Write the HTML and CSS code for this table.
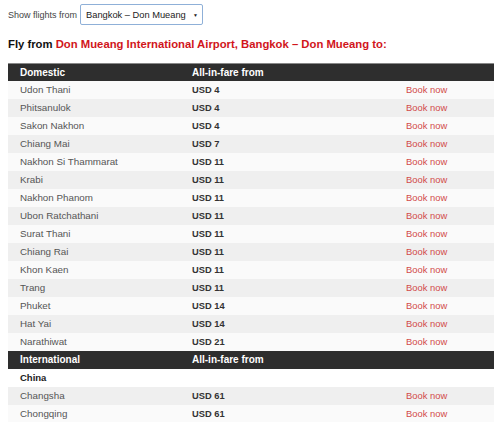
FILE: index.html
```html
<!DOCTYPE html>
<html>
<head>
<meta charset="utf-8">
<link rel="stylesheet" href="styles.css">
</head>
<body>
<div class="picker">
  <span class="picker-label">Show flights from</span>
  <div class="select">
    <span class="select-text">Bangkok – Don Mueang</span>
    <span class="select-arrow">▼</span>
  </div>
</div>
<h1 class="title">Fly from <span class="red">Don Mueang International Airport, Bangkok – Don Mueang to:</span></h1>
<table class="fares">
  <colgroup><col class="c1"><col class="c2"><col class="c3"></colgroup>
  <tr class="head"><td>Domestic</td><td>All-in-fare from</td><td></td></tr>
  <tr><td>Udon Thani</td><td class="price">USD 4</td><td class="book">Book now</td></tr>
  <tr><td>Phitsanulok</td><td class="price">USD 4</td><td class="book">Book now</td></tr>
  <tr><td>Sakon Nakhon</td><td class="price">USD 4</td><td class="book">Book now</td></tr>
  <tr><td>Chiang Mai</td><td class="price">USD 7</td><td class="book">Book now</td></tr>
  <tr><td>Nakhon Si Thammarat</td><td class="price">USD 11</td><td class="book">Book now</td></tr>
  <tr><td>Krabi</td><td class="price">USD 11</td><td class="book">Book now</td></tr>
  <tr><td>Nakhon Phanom</td><td class="price">USD 11</td><td class="book">Book now</td></tr>
  <tr><td>Ubon Ratchathani</td><td class="price">USD 11</td><td class="book">Book now</td></tr>
  <tr><td>Surat Thani</td><td class="price">USD 11</td><td class="book">Book now</td></tr>
  <tr><td>Chiang Rai</td><td class="price">USD 11</td><td class="book">Book now</td></tr>
  <tr><td>Khon Kaen</td><td class="price">USD 11</td><td class="book">Book now</td></tr>
  <tr><td>Trang</td><td class="price">USD 11</td><td class="book">Book now</td></tr>
  <tr><td>Phuket</td><td class="price">USD 14</td><td class="book">Book now</td></tr>
  <tr><td>Hat Yai</td><td class="price">USD 14</td><td class="book">Book now</td></tr>
  <tr><td>Narathiwat</td><td class="price">USD 21</td><td class="book">Book now</td></tr>
  <tr class="head"><td>International</td><td>All-in-fare from</td><td></td></tr>
  <tr class="country"><td>China</td><td></td><td></td></tr>
  <tr><td>Changsha</td><td class="price">USD 61</td><td class="book">Book now</td></tr>
  <tr class="even"><td>Chongqing</td><td class="price">USD 61</td><td class="book">Book now</td></tr>
</table>
</body>
</html>
```
FILE: styles.css
```css
body {
  margin: 0;
  padding: 4px 6px 0 8px;
  font-family: "Liberation Sans", Arial, sans-serif;
  font-size: 9.8px;
  color: #555;
  background: #fff;
}
.picker {
  display: flex;
  align-items: center;
  gap: 3px;
  height: 21px;
}
.picker-label {
  color: #444;
  font-size: 9px;
}
.select {
  border: 1px solid #8fb0d8;
  border-radius: 2px;
  display: flex;
  align-items: center;
  justify-content: space-between;
  padding: 0 4px 0 5px;
  box-sizing: border-box;
  width: 123px;
  height: 21px;
  color: #222;
  font-size: 9.3px;
}
.select-text { white-space: nowrap; }
.select-arrow {
  font-size: 5px;
  color: #222;
}
.title {
  margin: 11px 0 0 0;
  font-size: 11.3px;
  font-weight: bold;
  color: #111;
  line-height: 16px;
}
.red { color: #d1151b; }
.fares {
  margin-top: 11px;
  width: 486px;
  border-collapse: collapse;
  table-layout: fixed;
}
.c1 { width: 172px; }
.c2 { width: 214px; }
.c3 { width: 100px; }
.fares td {
  height: 18px;
  padding: 0 0 0 12px;
  line-height: 18px;
  white-space: nowrap;
  overflow: hidden;
}
.fares tr:nth-child(odd) td { background: #efefef; }
.fares tr:nth-child(even) td { background: #fafafa; }
.fares tr.head td {
  background: #2e2e2e;
  color: #fff;
  font-weight: bold;
  font-size: 10px;
}
.fares tr.head:first-child td { border-top: 1px solid #888; height: 17px; line-height: 17px; }
.fares tr.country td {
  background: #fff;
  color: #222;
  font-weight: bold;
  font-size: 9.5px;
}
.fares tr.even td { background: #fafafa; }
.price {
  font-weight: bold;
  color: #333;
  font-size: 9.3px;
}
.book {
  color: #d24a4a;
  font-size: 9.4px;
}
```
